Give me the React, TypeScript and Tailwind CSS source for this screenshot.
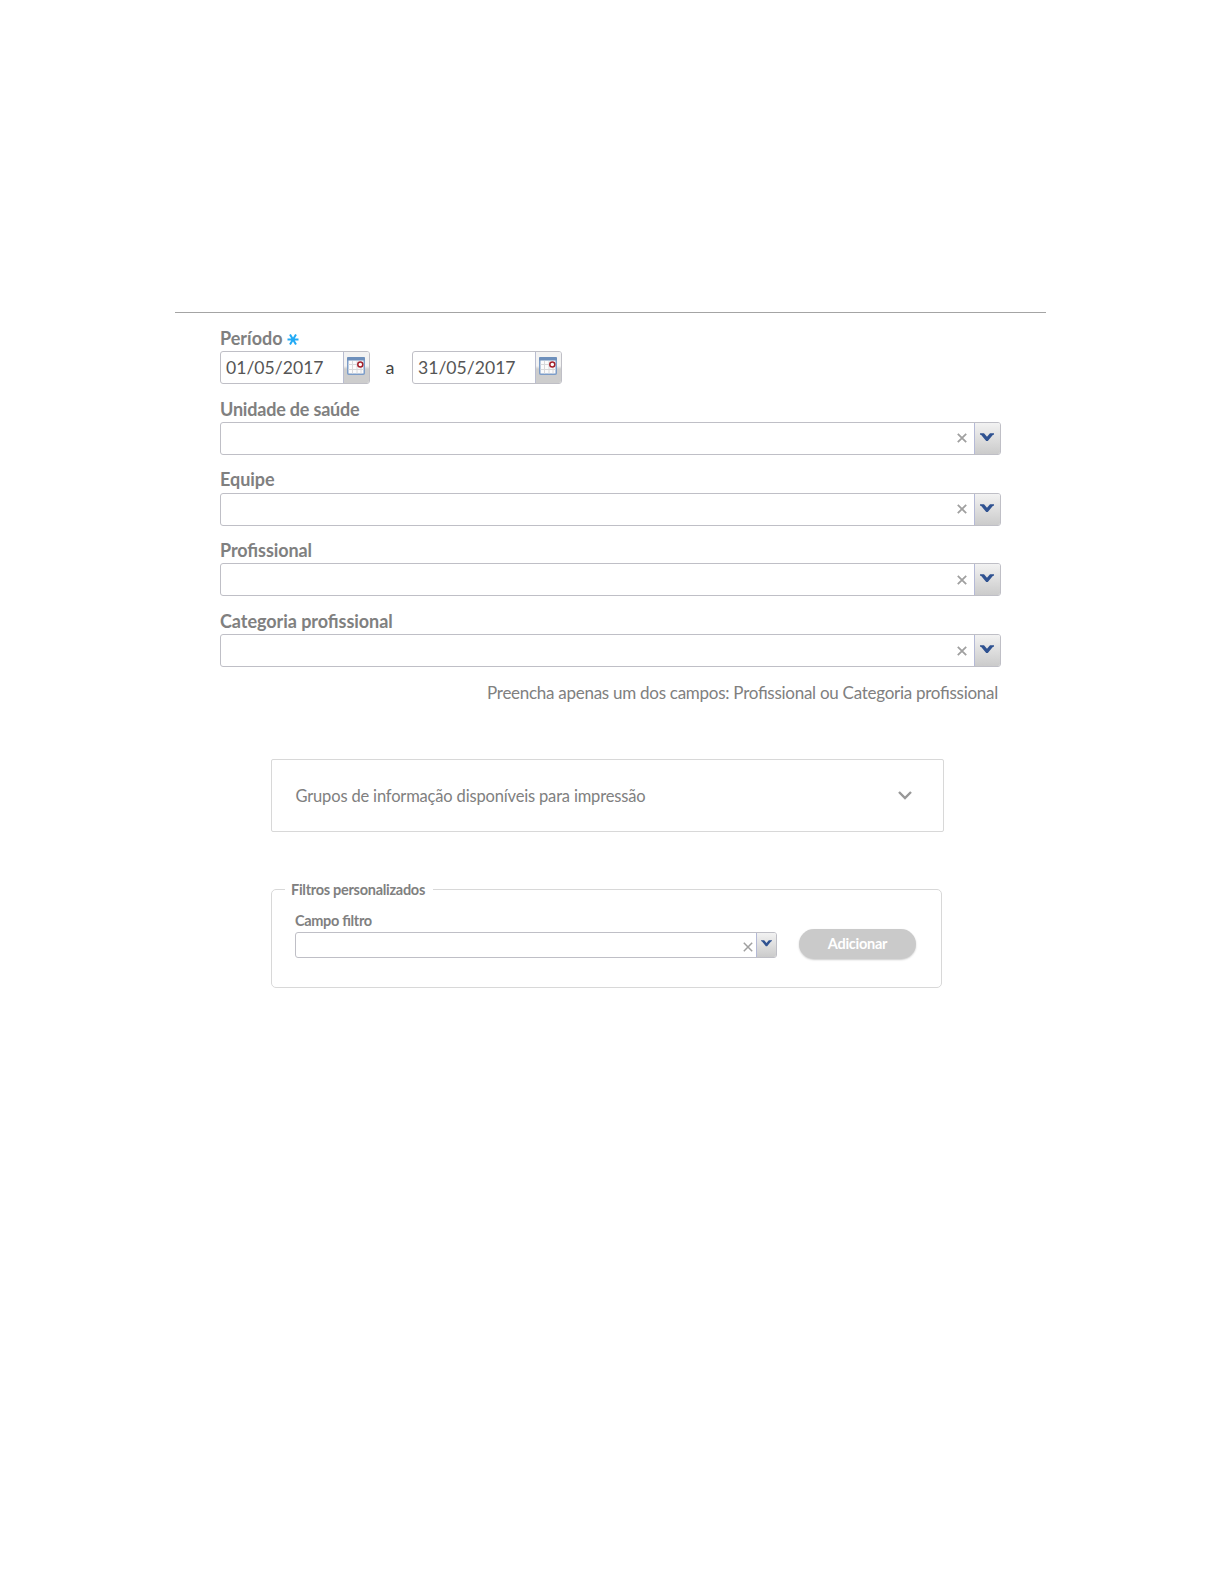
import React from "react";

const fields = [
    { label: "Unidade de saúde", tracking: "tracking-[-0.19px]" },
    { label: "Equipe", tracking: "tracking-[-0.05px]" },
    { label: "Profissional", tracking: "tracking-[-0.08px]" },
    { label: "Categoria profissional", tracking: "tracking-[-0.05px]" },
];

function CalendarIcon() {
    return (
        <svg width="18" height="18" viewBox="0 0 18 18">
            <rect x="0.75" y="1" width="16.5" height="16.25" rx="1" fill="#fbfbfb" stroke="#7b9cc8" strokeWidth="1.5" />
            <rect x="0" y="0" width="18" height="3.4" rx="1" fill="#6d8fbb" />
            <path d="M5.5 4v12.5M10 4v12.5M14 10v6.5M1.5 7.5h9M1.5 12.5h15" stroke="#d8d8da" strokeWidth="1" />
            <circle cx="13.3" cy="7.5" r="2.5" fill="#fff" stroke="#a3202b" strokeWidth="1.5" />
        </svg>
    );
}

function DateInput({ value }: { value: string }) {
    return (
        <div className="flex h-[33px] w-[150px] overflow-hidden rounded-[3px] border border-[#bfbfc6] bg-white">
            <span className="flex-1 pl-[5px] text-[17.6px] leading-[31px] text-[#555]">{value}</span>
            <span className="flex w-[26px] items-start border-l border-[#b9bdd0] bg-linear-to-b from-[#f2f2f2] from-45% to-[#cdcdcd] to-55% pt-[5px] pl-[3px]">
                <CalendarIcon />
            </span>
        </div>
    );
}

function Combo({ small }: { small?: boolean }) {
    return (
        <div className={`flex overflow-hidden rounded-[3px] border border-[#bfbfc6] bg-white ${small ? "h-[26px] w-[482px]" : "h-[33px] w-[781px]"}`}>
            <span className="flex-1" />
            <span className={`flex items-center justify-center ${small ? "w-[16px] pt-[3px]" : "w-[24px]"}`}>
                <svg width="10" height="10" viewBox="0 0 10 10">
                    <path d="M0.8 0.8l8.4 8.4M9.2 0.8L0.8 9.2" stroke="#a0a0a0" strokeWidth={small ? 1.5 : 1.8} />
                </svg>
            </span>
            <span className={`flex items-start border-l border-[#b4b9d6] bg-linear-to-b from-[#f2f2f2] to-[#cbcbcb] ${small ? "w-[20px] pt-[7px] pl-[4px]" : "w-[26px] pt-[10px] pl-[5px]"}`}>
                <svg width={small ? 11 : 14} height={small ? 7 : 9} viewBox="0 0 14 9">
                    <path d="M0 0.3h4L7 3.8l3-3.5h4v1.4h-1L7.8 8H6.2L1 1.7H0z" fill="#2f5291" />
                </svg>
            </span>
        </div>
    );
}

export default function App() {
    return (
        <main className="min-h-[1584px] w-[1224px] bg-white pt-[312px] font-[Lato,sans-serif] text-[#808080] [font-feature-settings:'liga'_1]">
            <hr className="ml-[175px] w-[871px] border-t border-[#a4a4a4]" />

            <section className="ml-[220px] w-[781px] pt-[13px]">
                <div className="flex h-[25px] items-start text-[18px] leading-[24px] font-bold">
                    <span>Período</span>
                    <svg className="mt-[8px] ml-[4px]" width="12" height="11" viewBox="0 0 12 11">
                        <path d="M0.5 5.5h11M3 0.5l6 10M9 0.5l-6 10" stroke="#22aaf5" strokeWidth="2" />
                    </svg>
                </div>
                <div className="flex">
                    <DateInput value="01/05/2017" />
                    <span className="w-[42px] pr-[2px] text-center text-[18px] leading-[33px] text-[#444]">a</span>
                    <DateInput value="31/05/2017" />
                </div>
                {fields.map((field) => (
                    <div key={field.label} className="h-[70.75px] pt-[12.5px]">
                        <p className={`h-[25.25px] text-[18px] leading-[24px] font-bold whitespace-nowrap ${field.tracking}`}>{field.label}</p>
                        <Combo />
                    </div>
                ))}
                <p className="pt-[13px] pr-[3px] text-right text-[17px] leading-[26px] tracking-[-0.27px] whitespace-nowrap">
                    Preencha apenas um dos campos: Profissional ou Categoria profissional
                </p>
            </section>

            {/* Print groups */}
            <section className="mt-[53px] ml-[271px] flex h-[73px] w-[673px] items-center justify-between rounded-[2px] border border-[#d8d8d8] pr-[31px] pl-[23.5px]">
                <span className="text-[16.5px] leading-[24px] tracking-[-0.168px]">Grupos de informação disponíveis para impressão</span>
                <svg width="14" height="9" viewBox="0 0 14 9">
                    <path d="M1 1l6 6 6-6" fill="none" stroke="#989898" strokeWidth="2.4" />
                </svg>
            </section>

            {/* Custom filters */}
            <fieldset className="mt-[46px] ml-[271px] h-[110px] w-[671px] rounded-[5px] border border-[#d8d8d8] pl-[23px]">
                <legend className="-ml-[10px] pt-[2px] pr-[8px] pl-[6px] text-[14.5px] leading-[20px] font-bold tracking-[-0.28px]">Filtros personalizados</legend>
                <div className="flex">
                    <div>
                        <p className="mt-[10px] h-[22px] text-[14.5px] leading-[22px] font-bold tracking-[-0.33px]">Campo filtro</p>
                        <Combo small />
                    </div>
                    <button className="mt-[29px] ml-[22px] h-[30px] w-[117px] rounded-full bg-[#cacaca] text-[14.5px] font-bold tracking-[-0.25px] text-white shadow-[0_1px_2px_#ccc]">
                        Adicionar
                    </button>
                </div>
            </fieldset>
        </main>
    );
}
